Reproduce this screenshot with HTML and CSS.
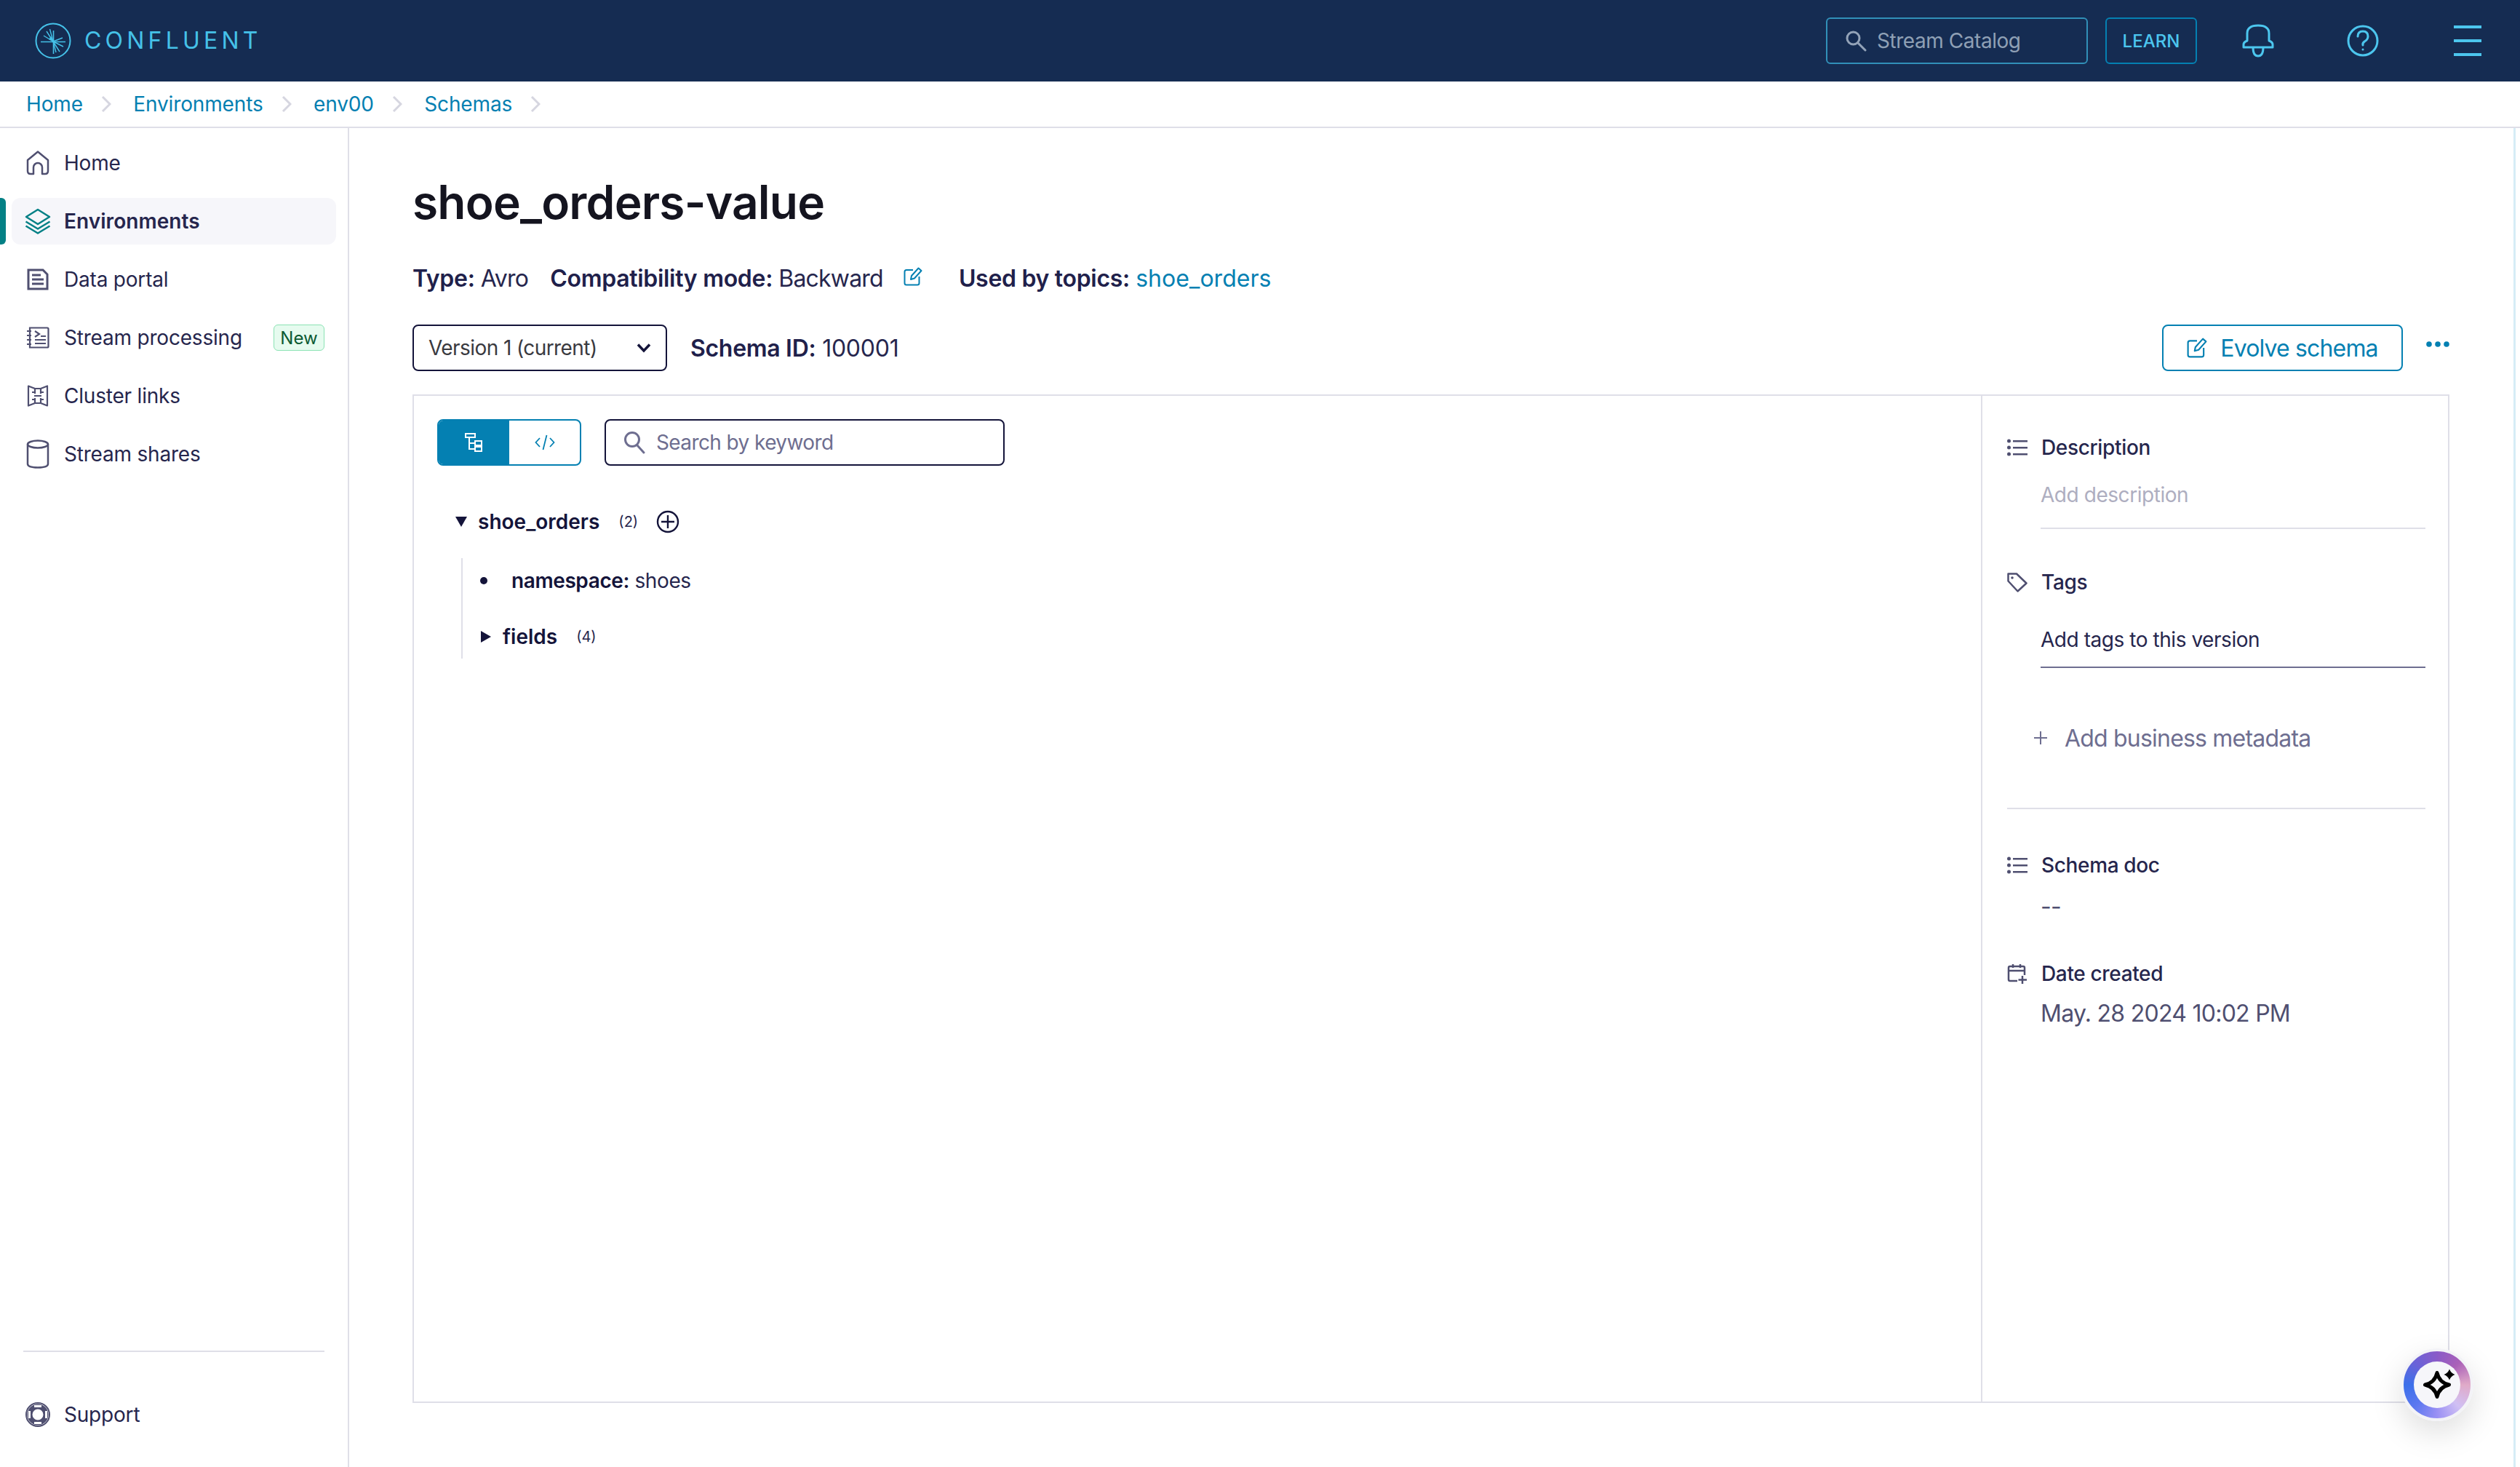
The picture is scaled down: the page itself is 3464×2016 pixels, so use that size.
FILE: index.html
```html
<!DOCTYPE html>
<html lang="en">
<head>
<meta charset="utf-8">
<title>shoe_orders-value</title>
<link rel="stylesheet" href="styles.css">
</head>
<body>
<div class="app">
  <header class="topbar">
    <div class="logo">
      <svg class="logo-mark" width="52" height="52" viewBox="0 0 52 52" fill="none" stroke="#45c1e8"><circle cx="26" cy="26" r="23.5" stroke-width="2"/><path d="M9 27.5H43" stroke-width="1.6"/><path d="M26.5 12V44" stroke-width="1.6"/><path d="M26 27L13 19M26 27L17 13M26 27L21.500 10M26 27L39 22M26 27L40 34M26 27L35 41M26 27L30 42" stroke-width="1.4"/><path d="M20 24L26 27L23 20Z" fill="#45c1e8" stroke="none"/></svg>
      <span class="logo-text">CONFLUENT</span>
    </div>
    <div class="top-actions">
      <div class="top-search">
        <svg width="30" height="30" viewBox="0 0 30 30" fill="none" stroke="#93a3b8" stroke-width="3"><circle cx="11.500" cy="11.500" r="8.500"/><path d="M18 18L28 28" stroke-linecap="round"/></svg>
        <span>Stream Catalog</span>
      </div>
      <div class="learn">LEARN</div>
      <svg class="bell" width="44" height="46" viewBox="0 0 44 46" fill="none" stroke="#4cc6ee" stroke-width="3"><path d="M2 32V28Q2 25 7 23V13Q7 2 22 2T37 13V23Q42 25 42 28V32Z" stroke-linejoin="round"/><path d="M15 32Q15 44 22 44T29 32"/></svg>
      <svg class="help" width="44" height="44" viewBox="0 0 44 44" fill="none" stroke="#4cc6ee" stroke-width="3"><circle cx="22" cy="22" r="20"/><path d="M15 16Q15 9 22 9T29 16Q29 20 25 22.500T22 28" stroke-linecap="round"/><circle cx="22" cy="34" r="1.500" fill="#4cc6ee" stroke="none"/></svg>
      <div class="menu"><i></i><i></i><i></i></div>
    </div>
  </header>

  <nav class="crumbs">
    <a>Home</a><svg class="chev" width="14" height="24" viewBox="0 0 14 24" fill="none" stroke="#d6d6e0" stroke-width="3"><path d="M2 2L12 12L2 22"/></svg>
    <a>Environments</a><svg class="chev" width="14" height="24" viewBox="0 0 14 24" fill="none" stroke="#d6d6e0" stroke-width="3"><path d="M2 2L12 12L2 22"/></svg>
    <a>env00</a><svg class="chev" width="14" height="24" viewBox="0 0 14 24" fill="none" stroke="#d6d6e0" stroke-width="3"><path d="M2 2L12 12L2 22"/></svg>
    <a>Schemas</a><svg class="chev" width="14" height="24" viewBox="0 0 14 24" fill="none" stroke="#d6d6e0" stroke-width="3"><path d="M2 2L12 12L2 22"/></svg>
  </nav>

  <div class="body">
    <aside class="sidebar">
      <ul class="nav">
        <li class="nav-item">
          <svg class="nav-icon" width="32" height="34" viewBox="0 0 32 34" fill="none" stroke="#4f4f70" stroke-width="2.500" stroke-linejoin="round"><path d="M2 13L16 1.500L30 13V28Q30 32 26 32H22V23A6 6 0 0 0 10 23V32H6Q2 32 2 28Z"/></svg>
          <span>Home</span>
        </li>
        <li class="nav-item active">
          <svg class="nav-icon" width="36" height="36" viewBox="0 0 36 36" fill="none" stroke="#038085" stroke-width="2.500" stroke-linejoin="round"><path d="M18 2L34 12L18 22L2 12Z"/><path d="M1.500 18.500L18 28.500L34.500 18.500"/><path d="M1.500 24.500L18 34.500L34.500 24.500"/></svg>
          <span>Environments</span>
        </li>
        <li class="nav-item">
          <svg class="nav-icon" width="32" height="30" viewBox="0 0 32 30" fill="none" stroke="#4f4f70" stroke-width="3"><path d="M3 2H23L29 8V28H3Z"/><path d="M8 9H20M8 15H24M8 21H24" stroke-width="3"/></svg>
          <span>Data portal</span>
        </li>
        <li class="nav-item">
          <svg class="nav-icon" width="32" height="30" viewBox="0 0 32 30" fill="none" stroke="#4f4f70" stroke-width="2.200"><path d="M5 1.500H29Q30.500 1.500 30.500 3V27Q30.500 28.500 29 28.500H5V1.500Z"/><path d="M1 6H7M1 12H7M1 18H7M1 24H7"/><path d="M12 6L18 10L12 14"/><path d="M20 13H27M12 18H27M12 23H27"/></svg>
          <span>Stream processing</span>
          <span class="badge">New</span>
        </li>
        <li class="nav-item">
          <svg class="nav-icon" width="32" height="30" viewBox="0 0 32 30" fill="none" stroke="#4f4f70" stroke-width="2.200" stroke-linejoin="round"><path d="M3 1.500L12 5H20L29 1.500V28.500L20 25H12L3 28.500Z"/><path d="M12 5V12M20 5V12M12 18V25M20 18V25M8 10H12M20 10H24M8 20H12M20 20H24M11 15H21"/></svg>
          <span>Cluster links</span>
        </li>
        <li class="nav-item">
          <svg class="nav-icon" width="32" height="40" viewBox="0 0 32 40" fill="none" stroke="#4f4f70" stroke-width="2.500"><ellipse cx="16" cy="6.500" rx="14" ry="5"/><path d="M2 6.500V33.500Q2 38.500 16 38.500T30 33.500V6.500"/></svg>
          <span>Stream shares</span>
        </li>
      </ul>
      <div class="side-foot">
        <div class="nav-item">
          <svg class="nav-icon" width="34" height="34" viewBox="0 0 34 34" fill="none"><circle cx="17" cy="17" r="16" stroke="#4f4f70" stroke-width="2"/><circle cx="17" cy="17" r="11" stroke="#4f4f70" stroke-width="7"/><path d="M12 5.500H22M12 28.500H22M5.500 12V22M28.500 12V22" stroke="#fff" stroke-width="3"/></svg>
          <span>Support</span>
        </div>
      </div>
    </aside>

    <main class="main">
      <div class="page">
        <h1 class="title">shoe_orders-value</h1>
        <div class="meta">
          <span class="type"><b>Type:</b> Avro</span>
          <span class="compat"><b>Compatibility mode:</b> Backward</span>
          <svg class="edit-meta" width="26" height="26" viewBox="0 0 26 26" fill="none" stroke="#0480b2" stroke-width="2"><path d="M13 4H4Q1.500 4 1.500 6.500V22Q1.500 24.500 4 24.500H19Q21.500 24.500 21.500 22V13"/><path d="M10 17L11 12L20.500 1.500L24.500 5L15 15.500Z" stroke-linejoin="round"/></svg>
          <span><b>Used by topics:</b> <a class="link">shoe_orders</a></span>
        </div>
        <div class="toolbar">
          <div class="version">
            <span>Version 1 (current)</span>
            <svg width="20" height="14" viewBox="0 0 20 14" fill="none" stroke="#14143a" stroke-width="3.500"><path d="M2 2.500L10 11L18 2.500"/></svg>
          </div>
          <div class="schema-id"><b>Schema ID:</b> 100001</div>
          <div class="evolve">
            <svg width="28" height="28" viewBox="0 0 26 26" fill="none" stroke="#0480b2" stroke-width="2"><path d="M13 4H4Q1.500 4 1.500 6.500V22Q1.500 24.500 4 24.500H19Q21.500 24.500 21.500 22V13"/><path d="M10 17L11 12L20.500 1.500L24.500 5L15 15.500Z" stroke-linejoin="round"/></svg>
            <span>Evolve schema</span>
          </div>
          <svg class="dots" width="32" height="8" viewBox="0 0 32 8" fill="#0480b2"><circle cx="4" cy="4" r="3.800"/><circle cx="16" cy="4" r="3.800"/><circle cx="28" cy="4" r="3.800"/></svg>
        </div>

        <section class="panel">
          <div class="tree-col">
            <div class="tree-tools">
              <div class="toggle">
                <div class="tg tg-on">
                  <svg width="26" height="26" viewBox="0 0 26 26" fill="none" stroke="#fff" stroke-width="2"><rect x="1" y="1" width="13" height="5"/><path d="M6 6V22H13M6 14H13"/><rect x="14" y="11" width="9" height="6"/><rect x="14" y="19" width="9" height="6"/></svg>
                </div>
                <div class="tg">
                  <svg width="28" height="22" viewBox="0 0 28 22" fill="none" stroke="#0480b2" stroke-width="1.800"><path d="M7 5L1.500 11L7 17M21 5L26.500 11L21 17M16.500 1L11.500 21"/></svg>
                </div>
              </div>
              <div class="kw-search">
                <svg width="30" height="32" viewBox="0 0 30 32" fill="none" stroke="#6e6e90" stroke-width="3"><circle cx="12" cy="12" r="9.500"/><path d="M19 20L28 30" stroke-linecap="round"/></svg>
                <span>Search by keyword</span>
              </div>
            </div>

            <div class="tree-row root">
              <svg width="16" height="14" viewBox="0 0 16 14" fill="#14143a"><path d="M0 0H16L8 14Z"/></svg>
              <b class="key">shoe_orders</b>
              <span class="count">(2)</span>
              <svg class="add" width="32" height="32" viewBox="0 0 32 32" fill="none" stroke="#14143a" stroke-width="2.400"><circle cx="16" cy="16" r="14"/><path d="M16 7V25M7 16H25"/></svg>
            </div>
            <div class="tree-children">
              <div class="tree-row ns">
                <i class="bullet"></i>
                <span><b class="key">namespace:</b> shoes</span>
              </div>
              <div class="tree-row fields">
                <svg width="14" height="16" viewBox="0 0 14 16" fill="#14143a"><path d="M0 0V16L14 8Z"/></svg>
                <b class="key">fields</b>
                <span class="count">(4)</span>
              </div>
            </div>
          </div>

          <div class="detail-col">
            <div class="d-head">
              <svg width="28" height="24" viewBox="0 0 28 24" fill="#4f4f70"><circle cx="2.500" cy="3" r="2.500"/><circle cx="2.500" cy="12" r="2.500"/><circle cx="2.500" cy="21" r="2.500"/><path d="M8 2H28V4.500H8ZM8 11H28V13.500H8ZM8 20H28V22.500H8Z"/></svg>
              <span>Description</span>
            </div>
            <div class="d-val muted under">Add description</div>
            <div class="d-head tags">
              <svg width="28" height="28" viewBox="0 0 28 28" fill="none" stroke="#4f4f70" stroke-width="2.500" stroke-linejoin="round"><path d="M1.500 2.500H13L26.500 15.500L14.500 26.500L1.500 12.500Z"/><circle cx="7" cy="8" r="1.800" fill="#4f4f70" stroke="none"/></svg>
              <span>Tags</span>
            </div>
            <div class="d-val dark under strong">Add tags to this version</div>
            <div class="add-meta">
              <svg width="18" height="18" viewBox="0 0 18 18" fill="none" stroke="#6e6e90" stroke-width="2"><path d="M9 0V18M0 9H18"/></svg>
              <span>Add business metadata</span>
            </div>
            <div class="d-sep"></div>
            <div class="d-head doc">
              <svg width="28" height="24" viewBox="0 0 28 24" fill="#4f4f70"><circle cx="2.500" cy="3" r="2.500"/><circle cx="2.500" cy="12" r="2.500"/><circle cx="2.500" cy="21" r="2.500"/><path d="M8 2H28V4.500H8ZM8 11H28V13.500H8ZM8 20H28V22.500H8Z"/></svg>
              <span>Schema doc</span>
            </div>
            <div class="d-val gray">--</div>
            <div class="d-head created">
              <svg width="28" height="28" viewBox="0 0 28 28" fill="none" stroke="#4f4f70" stroke-width="2.500"><path d="M14 24H4Q2 24 2 22V6Q2 4 4 4H22Q24 4 24 6V16"/><path d="M2 10H24M8 1V6M18 1V6"/><path d="M21 17V28M15.500 22.500H27"/></svg>
              <span>Date created</span>
            </div>
            <div class="d-val gray big">May. 28 2024 10:02 PM</div>
          </div>
        </section>
      </div>
      <div class="chat">
        <div class="chat-inner">
          <svg width="52" height="52" viewBox="0 0 52 52" fill="none"><path d="M26 9.500Q29 23 42.500 26Q29 29 26 42.500Q23 29 9.500 26Q23 23 26 9.500Z" stroke="#000" stroke-width="5" stroke-linejoin="round"/><path d="M43 4.500Q45 10 50.500 12Q45 14 43 19.500Q41 14 35.500 12Q41 10 43 4.500Z" fill="#000"/></svg>
        </div>
      </div>
    </main>
  </div>
</div>
</body>
</html>
```
FILE: styles.css
```css
* { box-sizing: border-box; }
html, body { margin: 0; padding: 0; height: 100%; background: #fff; }
body { font-family: Inter, "Liberation Sans", sans-serif; font-size: 28px; color: #14143a; overflow: hidden; }
b { font-weight: 600; }
svg { flex: none; display: block; }
ul { list-style: none; margin: 0; padding: 0; }

.app { display: flex; flex-direction: column; height: 2016px; }

.topbar { height: 112px; flex: none; background: #152c52; display: flex; align-items: center; justify-content: space-between; padding: 0 53px 0 47px; }
.logo { display: flex; align-items: center; gap: 17px; }
.logo-text { font-size: 32px; font-weight: 400; letter-spacing: 5.2px; color: #45c1e8; line-height: 40px; }
.top-actions { display: flex; align-items: center; }
.top-search { width: 360px; height: 64px; border: 2px solid #3190b8; border-radius: 6px; display: flex; align-items: center; gap: 14px; padding-left: 24px; color: #8fa0b5; font-size: 28px; letter-spacing: -0.45px; }
.learn { width: 126px; height: 64px; margin-left: 24px; border: 2px solid #0480b2; border-radius: 6px; display: flex; align-items: center; justify-content: center; color: #4cc6ee; font-size: 24px; font-weight: 500; }
.bell { margin-left: 62px; }
.help { margin-left: 100px; }
.menu { margin-left: 103px; width: 38px; display: flex; flex-direction: column; gap: 15px; }
.menu i { display: block; height: 4px; background: #4cc6ee; }

.crumbs { height: 64px; flex: none; border-bottom: 2px solid #dfdfe8; display: flex; align-items: center; padding-left: 36px; color: #0480b2; letter-spacing: -0.15px; }
.chev { margin: 0 30.5px 0 25px; }

.body { flex: 1; display: flex; min-height: 0; }
.sidebar { width: 480px; flex: none; border-right: 2px solid #dfdfe8; display: flex; flex-direction: column; justify-content: space-between; padding: 16px 16px 40px; }
.nav { display: flex; flex-direction: column; gap: 16px; }
.nav-item { position: relative; height: 64px; display: flex; align-items: center; padding-left: 20px; color: #26264d; width: 446px; letter-spacing: -0.2px; }
.nav-item > span:first-of-type { position: absolute; left: 72px; }
.nav-item .nav-icon { flex: none; }
.nav-item.active { background: #f6f6fa; border-radius: 12px; font-weight: 600; padding-left: 18px; letter-spacing: 0.05px; }
.nav-item.active::before { content: ""; position: absolute; left: -16px; top: 0; bottom: 0; width: 8px; background: #038085; border-radius: 0 6px 6px 0; }
.badge { margin-left: auto; margin-right: 16px; width: 70px; height: 36px; border: 1px solid #8be3b4; border-radius: 6px; background: #e6fbef; color: #0c5a33; font-size: 24px; letter-spacing: 0; display: flex; align-items: center; justify-content: center; }
.side-foot { border-top: 2px solid #dfdfe8; padding-top: 54px; width: 414px; margin-left: 16px; }
.side-foot .nav-item { margin-left: -16px; padding-left: 19px; }

.main { flex: 1; min-width: 0; position: relative; padding: 62px 0 0 87px; }
.main::after { content: ""; position: absolute; top: 0; bottom: 0; right: 6px; width: 3px; background: #d6edf6; }
.page { width: 2800px; display: flex; flex-direction: column; }
.title { margin: 0; font-size: 64px; line-height: 80px; font-weight: 600; color: #14141f; letter-spacing: -0.8px; }
.meta { margin-top: 44px; height: 40px; display: flex; align-items: center; gap: 30px; font-size: 32px; color: #26264d; letter-spacing: -0.8px; }
.meta b, .schema-id b { color: #20204a; letter-spacing: -0.3px; }
.edit-meta { margin: -4px 20px 0 -2px; }
.link { color: #0480b2; letter-spacing: 0; }
.toolbar { margin-top: 44px; height: 64px; display: flex; align-items: center; }
.version { width: 350px; height: 64px; border: 2.500px solid #14143a; border-radius: 8px; display: flex; align-items: center; justify-content: space-between; padding: 0 20px 0 20px; color: #3a3a3f; letter-spacing: -0.58px; }
.schema-id { margin-left: 32px; font-size: 32px; color: #26264d; letter-spacing: -0.25px; }
.evolve { margin-left: auto; width: 331px; height: 64px; border: 2px solid #0480b2; border-radius: 8px; display: flex; align-items: center; justify-content: center; gap: 18px; font-size: 32px; color: #0480b2; letter-spacing: -0.85px; }
.dots { margin: -10px 0 0 32px; }

.panel { margin-top: 32px; height: 1386px; border: 2px solid #dfdfe8; display: flex; }
.tree-col { flex: 1; padding: 32px; min-width: 0; }
.tree-tools { display: flex; gap: 32px; height: 64px; }
.toggle { width: 198px; height: 64px; border: 2px solid #0480b2; border-radius: 8px; display: flex; overflow: hidden; }
.tg { flex: 1; display: flex; align-items: center; justify-content: center; }
.tg-on { background: #0480b2; }
.kw-search { width: 550px; height: 64px; border: 2.500px solid #14143a; border-radius: 8px; display: flex; align-items: center; gap: 15px; padding-left: 24px; color: #6e6e90; letter-spacing: -0.6px; }
.tree-row { display: flex; align-items: center; height: 40px; color: #26264d; }
.key { color: #14143a; }
.root { margin-top: 57px; margin-left: 25px; }
.root .key { margin-left: 15px; }
.count { font-size: 20px; }
.root .count { margin-left: 26px; }
.add { margin-left: 25px; }
.tree-children { margin: 30px 0 0 33px; border-left: 2px solid #dfdfe8; padding: 11px 0 10px; }
.ns { padding-left: 24px; gap: 33px; letter-spacing: -0.4px; }
.bullet { width: 10px; height: 10px; border-radius: 50%; background: #14143a; }
.fields { margin-top: 37px; padding-left: 25px; gap: 16px; }
.fields .count { margin-left: 10px; }

.detail-col { width: 642px; flex: none; border-left: 2px solid #dfdfe8; padding: 51px 31px 0 34px; }
.d-head { display: flex; align-items: center; gap: 19px; height: 40px; font-weight: 500; color: #26264d; letter-spacing: -0.35px; }
.d-val { margin-left: 46px; height: 40px; margin-top: 26px; display: flex; align-items: center; letter-spacing: -0.45px; }
.under { height: 66px; margin-top: 26px; padding-bottom: 26px; border-bottom: 2px solid #dfdfe8; margin-bottom: 0; }
.muted { color: #aeaec0; }
.dark { color: #26264d; }
.strong { height: 58px; margin-top: 40px; padding-bottom: 18px; border-bottom-color: #6e6e90; }
.tags { margin-top: 53px; }
.add-meta { margin: 76px 0 0 37px; height: 40px; display: flex; align-items: center; gap: 24px; font-size: 32px; color: #6e6e90; letter-spacing: -0.8px; }
.d-sep { margin-top: 76px; height: 2px; background: #dfdfe8; }
.doc { margin-top: 57px; }
.gray { color: #4f4f70; font-size: 32px; margin-top: 16px; letter-spacing: -0.73px; }
.created { margin-top: 53px; }
.big { margin-top: 14px; }

.chat { position: absolute; left: 2820px; top: 1677px; width: 100px; height: 100px; border-radius: 50%; border: 4px solid #f3f3f7; background: conic-gradient(#8a5ac8, #aa60b8 45deg, #e0aac8 90deg, #d0c0f4 135deg, #9a90f4 180deg, #5c78f0 225deg, #3c70ea 270deg, #6a62d8 315deg, #8a5ac8); box-shadow: 0 16px 44px rgba(0,0,0,.13); display: flex; align-items: center; justify-content: center; }
.chat-inner { width: 64px; height: 64px; border-radius: 50%; background: #f6f6fa; display: flex; align-items: center; justify-content: center; }
```
